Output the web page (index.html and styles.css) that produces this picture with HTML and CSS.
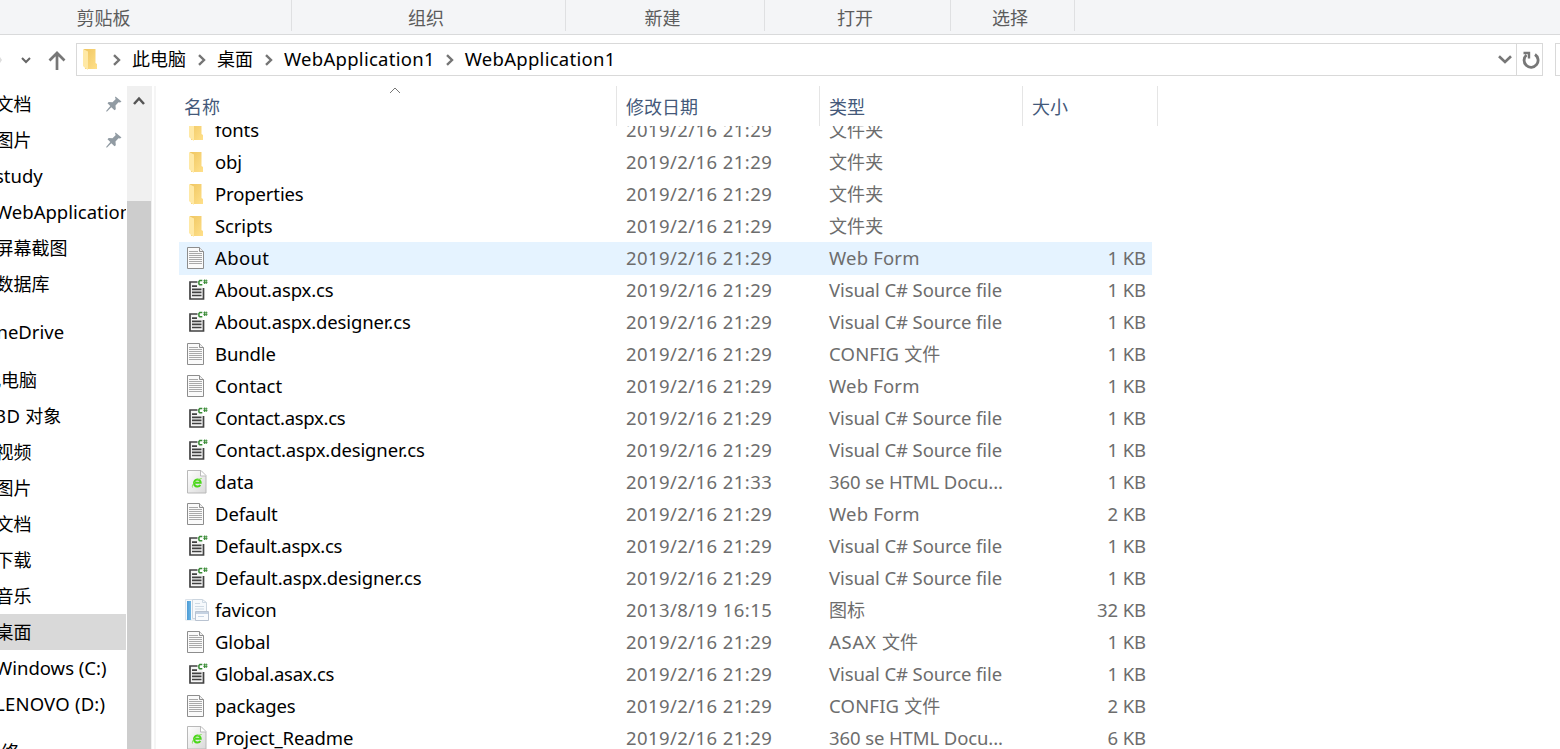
FILE: index.html
```html
<!DOCTYPE html>
<html lang="zh-CN">
<head>
<meta charset="utf-8">
<title>WebApplication1</title>
<link rel="stylesheet" href="styles.css">
</head>
<body>
<svg class="defs" width="0" height="0">
  <defs>
    <linearGradient id="fold" x1="0" y1="0" x2="1" y2="1"><stop offset="0" stop-color="#efc661"/><stop offset="1" stop-color="#ffe08a"/></linearGradient>
    <linearGradient id="paper" x1="0" y1="0" x2="1" y2="1"><stop offset="0" stop-color="#fff"/><stop offset="1" stop-color="#d9d9d9"/></linearGradient>
    <linearGradient id="blue" x1="0" y1="0" x2="1" y2="0"><stop offset="0" stop-color="#4d9bd5"/><stop offset="1" stop-color="#6bb6e6"/></linearGradient>
    <symbol id="folder" viewBox="0 0 24 24"><path d="M4 2h11.500v14l1.500 1v5H5z" fill="url(#fold)"/><path d="M3 2l5 2.500v18.500l-4-3-1-1z" fill="#ffe9a6"/></symbol>
    <symbol id="doc" viewBox="0 0 24 24"><path d="M1.500 1.500h12l4 4v17h-16z" fill="#fafafa" stroke="#8d8d8d"/><path d="M13.500 1.500v4h4" fill="#eee" stroke="#8d8d8d"/><path d="M3 5.500h9M3 7.500h13M3 9.500h13M3 11.500h13M3 13.500h13M3 15.500h13M3 17.500h13" stroke="#a9a9a9"/></symbol>
    <symbol id="cs" viewBox="0 0 24 24"><path d="M11.500 4H4v17h13.500V10" fill="#f5f5f5" stroke="#424242" stroke-width="1.700"/><path d="M6 8.200h5M6 11.300h9.500M6 14.400h9.500M6 17.500h9.500" stroke="#424242" stroke-width="1.700"/><path d="M16.300 2.600h-2.500l-.9.900v2.400l.9.900h2.500" fill="none" stroke="#388a34" stroke-width="1.500"/><path d="M18.500 1.500v4.500M20.200 1.500v4.500M17.300 2.800h4.200M17.300 4.600h4.200" stroke="#388a34" stroke-width=".9"/></symbol>
    <symbol id="html" viewBox="0 0 24 24"><path d="M1.500.5h13.500l5 5v17.500h-18.500z" fill="url(#paper)" stroke="#b9b9b9"/><path d="M14.500 1v5h5.500" fill="#fff" stroke="#bbb"/><path d="M14.300 15c-1.300 2.300-5.800 2.100-6.300-1.500-.4-5.200 6.700-5.200 6.700-.7H8.500" fill="none" stroke="#4bd71b" stroke-width="2"/><path d="M6.500 17.500c-1.200-3 4.500-8.500 9.200-9" fill="none" stroke="#7be04f" stroke-width=".9"/></symbol>
    <symbol id="ico" viewBox="0 0 24 24"><path d="M.5 1.500h12V22H.5z" fill="#f8fafc" stroke="#dce3ea"/><path d="M2 3h4v19H2z" fill="url(#blue)"/><path d="M7.500 1.500h10l4 3v16h-14z" fill="#f6f9fc" stroke="#cbd5df"/><path d="M17.500 1.500v3h4M10 5.500h5M10 8.500h9M10 11h9" fill="none" stroke="#cfdae4"/><path d="M10.500 13.500h13v9h-13z" fill="#fafbfd" stroke="#b9c3d1"/><path d="M11 15h12" stroke="#c5d2e2" stroke-width="2"/><path d="M13 18.500h6" stroke="#c9d7e6"/></symbol>
    <symbol id="pin" viewBox="0 0 16 16"><path d="M9.500.5l6 5-1.500 1-1.500-.2-3 3.200.3 3.700-1.300 1-3.200-3L.8 15.700l-.7-.7L4.300 10 1.500 7.300l1.200-1.200 3.800.1 3.300-3.300-.8-1.200z" fill="#919ba3"/></symbol>
    <symbol id="sep" viewBox="0 0 8 12"><path d="M1 1.200L6 6l-5 4.800" fill="none" stroke="#757575" stroke-width="2.400"/></symbol>
  </defs>
</svg>
<div class="window">
  <div class="ribbon">
    <div class="group clipboard">剪贴板</div><div class="group organize">组织</div><div class="group new">新建</div><div class="group open">打开</div><div class="group select">选择</div>
  </div>
  <div class="addressbar">
    <div class="navbuttons">
      <svg class="forward" width="3" height="8"><path d="M0 1l2 3-2 3z" fill="#ddd"/></svg>
      <svg class="recent" width="10" height="7" viewBox="0 0 10 7"><path d="M1 1l4 4 4-4" fill="none" stroke="#666" stroke-width="2"/></svg>
      <svg class="up" width="18" height="19" viewBox="0 0 18 19"><path d="M9 19V2M1.500 9.500L9 2l7.500 7.500" fill="none" stroke="#777" stroke-width="2.700"/></svg>
    </div>
    <div class="path">
      <svg class="icon"><use href="#folder"/></svg>
      <svg class="sep"><use href="#sep"/></svg><span class="crumb c1">此电脑</span>
      <svg class="sep"><use href="#sep"/></svg><span class="crumb c2">桌面</span>
      <svg class="sep"><use href="#sep"/></svg><span class="crumb c3 en">WebApplication1</span>
      <svg class="sep"><use href="#sep"/></svg><span class="crumb en">WebApplication1</span>
      <svg class="dropdown" width="14" height="9" viewBox="0 0 14 9"><path d="M1 1.200l6 5.800 6-5.800" fill="none" stroke="#777" stroke-width="2.600"/></svg>
      <div class="refresh"><svg width="18" height="18" viewBox="0 0 18 18"><path d="M13 3.500A7 7 0 1 1 4.500 4" fill="none" stroke="#777" stroke-width="2.800"/><path d="M1.500 2H7v5.500" fill="none" stroke="#777" stroke-width="2.400"/></svg></div>
    </div>
    <div class="search"></div>
  </div>
  <div class="main">
    <nav class="tree">
      <div class="item"><span>文档</span><svg class="pin"><use href="#pin"/></svg></div>
      <div class="item"><span>图片</span><svg class="pin"><use href="#pin"/></svg></div>
      <div class="item en"><span>study</span></div>
      <div class="item en"><span>WebApplication1</span></div>
      <div class="item"><span>屏幕截图</span></div>
      <div class="item"><span>数据库</span></div>
      <div class="item root en"><span>OneDrive</span></div>
      <div class="item root"><span>此电脑</span></div>
      <div class="item"><span><b class="en">3D</b> 对象</span></div>
      <div class="item"><span>视频</span></div>
      <div class="item"><span>图片</span></div>
      <div class="item"><span>文档</span></div>
      <div class="item"><span>下载</span></div>
      <div class="item"><span>音乐</span></div>
      <div class="item current"><span>桌面</span></div>
      <div class="item en"><span>Windows (C:)</span></div>
      <div class="item en wide"><span>LENOVO (D:)</span></div>
      <div class="item root"><span>网络</span></div>
    </nav>
    <div class="scrollbar"><svg width="12" height="9" viewBox="0 0 12 9"><path d="M1 8l5-5.500L11 8" fill="none" stroke="#555" stroke-width="2.500"/></svg><div class="thumb"></div></div>
    <div class="divider"></div>
    <section class="files">
      <div class="head">
        <div class="col name">名称<svg class="sort" width="12" height="7" viewBox="0 0 12 7"><path d="M1 6l5-5 5 5" fill="none" stroke="#777"/></svg></div><div class="col date">修改日期</div><div class="col type">类型</div><div class="col size">大小</div>
      </div>
      <div class="viewport"><div class="rows">
        <div class="row"><svg class="icon"><use href="#folder"/></svg><span class="fname">fonts</span><span class="fdate">2019/2/16 21:29</span><span class="ftype cn">文件夹</span><span class="fsize"></span></div>
        <div class="row"><svg class="icon"><use href="#folder"/></svg><span class="fname">obj</span><span class="fdate">2019/2/16 21:29</span><span class="ftype cn">文件夹</span><span class="fsize"></span></div>
        <div class="row"><svg class="icon"><use href="#folder"/></svg><span class="fname">Properties</span><span class="fdate">2019/2/16 21:29</span><span class="ftype cn">文件夹</span><span class="fsize"></span></div>
        <div class="row"><svg class="icon"><use href="#folder"/></svg><span class="fname">Scripts</span><span class="fdate">2019/2/16 21:29</span><span class="ftype cn">文件夹</span><span class="fsize"></span></div>
        <div class="row hover"><svg class="icon"><use href="#doc"/></svg><span class="fname about">About</span><span class="fdate">2019/2/16 21:29</span><span class="ftype short">Web Form</span><span class="fsize">1 KB</span></div>
        <div class="row"><svg class="icon"><use href="#cs"/></svg><span class="fname">About.aspx.cs</span><span class="fdate">2019/2/16 21:29</span><span class="ftype">Visual C# Source file</span><span class="fsize">1 KB</span></div>
        <div class="row"><svg class="icon"><use href="#cs"/></svg><span class="fname">About.aspx.designer.cs</span><span class="fdate">2019/2/16 21:29</span><span class="ftype">Visual C# Source file</span><span class="fsize">1 KB</span></div>
        <div class="row"><svg class="icon"><use href="#doc"/></svg><span class="fname">Bundle</span><span class="fdate">2019/2/16 21:29</span><span class="ftype short">CONFIG <i class="cn">文件</i></span><span class="fsize">1 KB</span></div>
        <div class="row"><svg class="icon"><use href="#doc"/></svg><span class="fname short">Contact</span><span class="fdate">2019/2/16 21:29</span><span class="ftype short">Web Form</span><span class="fsize">1 KB</span></div>
        <div class="row"><svg class="icon"><use href="#cs"/></svg><span class="fname dense">Contact.aspx.cs</span><span class="fdate">2019/2/16 21:29</span><span class="ftype">Visual C# Source file</span><span class="fsize">1 KB</span></div>
        <div class="row"><svg class="icon"><use href="#cs"/></svg><span class="fname">Contact.aspx.designer.cs</span><span class="fdate">2019/2/16 21:29</span><span class="ftype">Visual C# Source file</span><span class="fsize">1 KB</span></div>
        <div class="row"><svg class="icon"><use href="#html"/></svg><span class="fname short">data</span><span class="fdate">2019/2/16 21:33</span><span class="ftype">360 se HTML Docu...</span><span class="fsize">1 KB</span></div>
        <div class="row"><svg class="icon"><use href="#doc"/></svg><span class="fname">Default</span><span class="fdate">2019/2/16 21:29</span><span class="ftype short">Web Form</span><span class="fsize">2 KB</span></div>
        <div class="row"><svg class="icon"><use href="#cs"/></svg><span class="fname dense">Default.aspx.cs</span><span class="fdate">2019/2/16 21:29</span><span class="ftype">Visual C# Source file</span><span class="fsize">1 KB</span></div>
        <div class="row"><svg class="icon"><use href="#cs"/></svg><span class="fname">Default.aspx.designer.cs</span><span class="fdate">2019/2/16 21:29</span><span class="ftype">Visual C# Source file</span><span class="fsize">1 KB</span></div>
        <div class="row"><svg class="icon wide-icon"><use href="#ico"/></svg><span class="fname">favicon</span><span class="fdate">2013/8/19 16:15</span><span class="ftype cn">图标</span><span class="fsize">32 KB</span></div>
        <div class="row"><svg class="icon"><use href="#doc"/></svg><span class="fname">Global</span><span class="fdate">2019/2/16 21:29</span><span class="ftype asax">ASAX <i class="cn">文件</i></span><span class="fsize">1 KB</span></div>
        <div class="row"><svg class="icon"><use href="#cs"/></svg><span class="fname dense">Global.asax.cs</span><span class="fdate">2019/2/16 21:29</span><span class="ftype">Visual C# Source file</span><span class="fsize">1 KB</span></div>
        <div class="row"><svg class="icon"><use href="#doc"/></svg><span class="fname">packages</span><span class="fdate">2019/2/16 21:29</span><span class="ftype short">CONFIG <i class="cn">文件</i></span><span class="fsize">2 KB</span></div>
        <div class="row"><svg class="icon"><use href="#html"/></svg><span class="fname">Project_Readme</span><span class="fdate">2019/2/16 21:29</span><span class="ftype">360 se HTML Docu...</span><span class="fsize">6 KB</span></div>
      </div></div>
    </section>
  </div>
</div>
</body>
</html>
```
FILE: styles.css
```css
* { box-sizing: border-box; }
body { margin: 0; font: 18px "Noto Sans", "Noto Sans CJK SC", sans-serif; color: #000; background: #fff; }
svg { display: block; flex: none; }
b, i { font-weight: normal; font-style: normal; }
.defs { position: absolute; }
.window { width: 1560px; height: 749px; overflow: hidden; display: flex; flex-direction: column; }
.en { font-size: 18.5px; }
.cn { font-size: 18px; }

.ribbon { height: 35px; flex: none; display: flex; background: #f4f5f7; border-bottom: 1px solid #d9dadb; color: #5c5c5c; }
.group { height: 31px; line-height: 36px; text-align: center; padding-right: 5px; border-right: 1px solid #dfe0e2; }
.clipboard { width: 292px; padding-right: 84px; }
.organize { width: 274px; }
.new { width: 199px; }
.open { width: 186px; }
.select { width: 124px; }

.addressbar { height: 51px; flex: none; display: flex; align-items: flex-start; padding-top: 8px; }
.navbuttons { width: 76px; height: 33px; display: flex; align-items: center; }
.recent { margin-left: 18px; margin-top: 1px; }
.up { margin-left: 17px; margin-top: 1px; }
.path { width: 1467px; height: 33px; border: 1px solid #d9d9d9; display: flex; align-items: center; padding-left: 3px; }
.path .icon { width: 24px; height: 24px; margin-top: -1px; }
.sep { width: 8px; height: 12px; margin: 1px 0 0 9px; }
.crumb { margin-left: 11px; line-height: 31px; white-space: nowrap; }
.c1 { margin-right: 3px; }
.c2 { margin-right: 3px; }
.crumb.en { margin-left: 11px; margin-top: -2px; letter-spacing: 0.27px; }
.crumb.c3 { margin-right: 2px; }
.dropdown { margin-left: auto; }
.refresh { width: 26px; height: 31px; margin-left: 4px; border-left: 1px solid #d9d9d9; display: flex; align-items: center; justify-content: center; padding-left: 2px; }
.search { width: 5px; height: 33px; margin-left: 12px; border: 1px solid #d9d9d9; border-right: 0; }

.main { flex: 1; min-height: 0; display: flex; }
.tree { width: 127px; padding-right: 1px; overflow: hidden; }
.item { height: 36px; line-height: 37px; display: flex; align-items: center; white-space: nowrap; overflow: hidden; }
.item.en { line-height: 36px; }
.item > span { margin-left: -4.5px; }
.item.en > span { margin-left: -5px; }
.item.root { margin-top: 12px; }
.item.root > span { margin-left: -17px; }
.item.root.en > span { margin-left: -18px; }
.item.wide { letter-spacing: 0.2px; }
.item b { letter-spacing: 0.5px; }
.item.current { background: #d9d9d9; }
.pin { width: 16px; height: 16px; margin-left: auto; margin-right: 4px; }
.scrollbar { width: 25px; background: #f0f0f0; padding-top: 10px; display: flex; flex-direction: column; }
.scrollbar svg { margin-left: 6px; }
.thumb { width: 24px; flex: 1; margin-top: 96px; background: #cdcdcd; }
.divider { width: 2px; margin-left: 2px; background: #f5f5f5; }

.files { width: 1002px; margin-left: 23px; display: flex; flex-direction: column; }
.head { height: 40px; flex: none; display: flex; color: #44597a; }
.col { line-height: 42px; padding-left: 9px; border-right: 1px solid #e5e5e5; }
.col.name { width: 438px; padding-left: 5px; display: flex; }
.col.date, .col.type { width: 203px; }
.col.size { width: 135px; }
.sort { margin: 1px 0 0 169px; }
.viewport { flex: 1; min-height: 0; overflow: hidden; }
.rows { margin-top: -12px; }
.row { width: 973px; height: 32px; line-height: 32px; display: flex; align-items: center; padding-left: 7px; color: #6d6d6d; white-space: nowrap; font-size: 18.5px; }
.row.hover { background: #e5f3ff; box-shadow: 0 1px #e5f3ff; }
.row .icon { width: 24px; height: 24px; }
.row .wide-icon { margin-left: -1px; margin-right: 1px; }
.fname { width: 410px; padding-left: 5px; color: #000; letter-spacing: -0.13px; }
.fname.dense { letter-spacing: -0.28px; }
.fname.short { letter-spacing: 0.05px; }
.fname.about { letter-spacing: 0.35px; }
.fdate { width: 203px; padding-left: 6px; letter-spacing: 0.42px; }
.ftype { width: 203px; padding-left: 6px; letter-spacing: -0.1px; }
.ftype.short { letter-spacing: 0.18px; }
.ftype.asax { letter-spacing: 0.7px; }
.ftype.cn, .ftype .cn { letter-spacing: 0.1px; }
.fsize { width: 126px; padding-right: 6px; text-align: right; letter-spacing: -0.1px; }
```
